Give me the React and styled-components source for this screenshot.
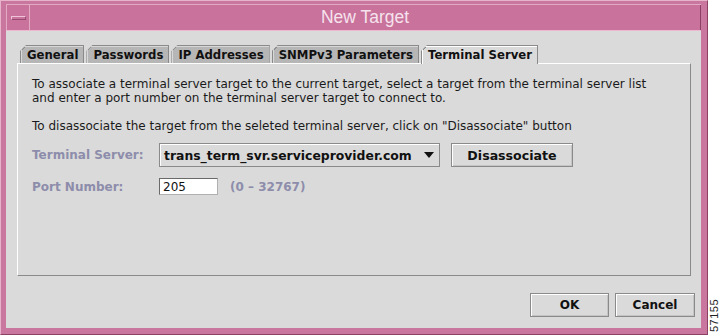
import React from "react";
import styled, { createGlobalStyle } from "styled-components";

const GlobalStyle = createGlobalStyle`
  html, body {
    margin: 0;
    padding: 0;
    background: #ffffff;
  }
  body {
    font-family: "DejaVu Sans", "Liberation Sans", sans-serif;
  }
`;

const Page = styled.div`
  display: flex;
  width: 720px;
  height: 335px;
  overflow: hidden;
`;

const Window = styled.div`
  box-sizing: border-box;
  width: 708px;
  height: 335px;
  display: flex;
  flex-direction: column;
  background: #c9779e;
  border: 1px solid;
  border-color: #e6b3cb #8c4065 #8c4065 #e6b3cb;
  padding: 3px 6px 6px 5px;
`;

const TitleBar = styled.div`
  box-sizing: border-box;
  display: flex;
  height: 27px;
  background: #c8729c;
  border-top: 1px solid #e3aac4;
  border-bottom: 1px solid #eab8cf;
`;

const MenuButton = styled.div`
  box-sizing: border-box;
  width: 24px;
  display: flex;
  align-items: center;
  justify-content: center;
  border-left: 1px solid #e3aac4;
  border-right: 1px solid #e3aac4;
`;

const MenuBar = styled.div`
  box-sizing: border-box;
  width: 15px;
  height: 4px;
  border: 1px solid;
  border-color: #f0c4d8 #9a4a70 #9a4a70 #f0c4d8;
`;

const Title = styled.div`
  flex: 1;
  display: flex;
  align-items: center;
  justify-content: center;
  font-family: "Liberation Sans", Arial, sans-serif;
  font-size: 17.5px;
  color: #f6e2ec;
  border-right: 1px solid #8c4065;
`;

const Body = styled.div`
  flex: 1;
  display: flex;
  flex-direction: column;
  background: #dadada;
  padding: 14px 6px 10px 11px;
`;

const TabRow = styled.div`
  display: flex;
  align-items: flex-end;
  gap: 2px;
  height: 18px;
  padding-left: 3px;
  position: relative;
  z-index: 1;
`;

const Tab = styled.div`
  box-sizing: border-box;
  height: ${(p) => (p.$active ? "19px" : "18px")};
  margin-bottom: ${(p) => (p.$active ? "-1px" : "0")};
  display: flex;
  align-items: center;
  padding: 0 5px 0 6px;
  font-size: 11.7px;
  font-weight: bold;
  color: #111;
  border: 1px solid #8a8a8a;
  border-bottom: none;
  box-shadow: inset 1px 1px 0 ${(p) => (p.$active ? "#ffffff" : "#d8d8d8")};
  background: linear-gradient(
    135deg,
    transparent 4px,
    #8a8a8a 4px,
    #8a8a8a 5px,
    ${(p) => (p.$active ? "#dadada" : "#b6b6b6")} 5px
  );
  background-origin: border-box;
  clip-path: polygon(6px 0, 100% 0, 100% 100%, 0 100%, 0 6px);
`;

const Panel = styled.div`
  box-sizing: border-box;
  height: 213px;
  margin-right: 4px;
  border: 1px solid;
  border-color: #ffffff #8a8a8a #8a8a8a #ffffff;
  padding: 13px 14px;
  font-size: 12px;
  color: #1a1a1a;
`;

const Para = styled.p`
  margin: 0 0 ${(p) => p.$mb}px 0;
  line-height: 14px;
`;

const Form = styled.div`
  display: grid;
  grid-template-columns: 127px auto;
  row-gap: 11px;
  align-items: center;
`;

const Label = styled.div`
  font-size: 12px;
  font-weight: bold;
  color: #8d8dab;
`;

const Line = styled.div`
  display: flex;
  align-items: center;
  gap: ${(p) => p.$gap || 11}px;
`;

const Combo = styled.div`
  box-sizing: border-box;
  width: 281px;
  height: 24px;
  display: flex;
  align-items: center;
  justify-content: space-between;
  padding: 0 5px 0 4px;
  border: 1px solid #8a8a8a;
  box-shadow: inset 1px 1px 0 #ffffff;
  font-size: 12.4px;
  font-weight: bold;
  color: #111;
`;

const Button = styled.div`
  box-sizing: border-box;
  width: ${(p) => p.$w}px;
  height: 24px;
  display: flex;
  align-items: center;
  justify-content: center;
  border: 1px solid #8a8a8a;
  box-shadow: inset 1px 1px 0 #ffffff, inset -1px -1px 0 #c4c4c4;
  font-size: ${(p) => p.$size || 12}px;
  font-weight: bold;
  color: #111;
`;

const Input = styled.div`
  box-sizing: border-box;
  width: 59px;
  height: 17px;
  display: flex;
  align-items: center;
  padding-left: 3px;
  background: #ffffff;
  border: 1px solid;
  border-color: #6a6a6a #b0b0b0 #b0b0b0 #6a6a6a;
  font-size: 12px;
  color: #111;
`;

const Range = styled.span`
  font-size: 12px;
  font-weight: bold;
  color: #8d8dab;
`;

const Footer = styled.div`
  display: flex;
  justify-content: flex-end;
  gap: 6px;
  margin-top: 17px;
`;

const Side = styled.div`
  flex: 1;
  display: flex;
  align-items: flex-end;
  justify-content: center;
  padding-bottom: 3px;
`;

const FigNumber = styled.div`
  writing-mode: vertical-rl;
  transform: rotate(180deg);
  font-family: "Liberation Sans", Arial, sans-serif;
  font-size: 11px;
  letter-spacing: 0.5px;
  color: #222;
`;

const tabs = ["General", "Passwords", "IP Addresses", "SNMPv3 Parameters", "Terminal Server"];

const App = () => {
  return (
    <>
      <GlobalStyle />
      <Page>
        <Window>
          <TitleBar>
            <MenuButton>
              <MenuBar />
            </MenuButton>
            <Title>New Target</Title>
          </TitleBar>
          <Body>
            <TabRow>
              {tabs.map((t) => (
                <Tab key={t} $active={t === "Terminal Server"}>
                  {t}
                </Tab>
              ))}
            </TabRow>
            <Panel>
              <Para $mb={14}>
                To associate a terminal server target to the current target, select a target from the terminal server list
                <br />
                and enter a port number on the terminal server target to connect to.
              </Para>
              <Para $mb={10}>
                To disassociate the target from the seleted terminal server, click on "Disassociate" button
              </Para>
              <Form>
                <Label>Terminal Server:</Label>
                <Line>
                  <Combo>
                    <span>trans_term_svr.serviceprovider.com</span>
                    <svg width="10" height="6" viewBox="0 0 10 6">
                      <path d="M0 0 L10 0 L5 6 Z" fill="#111" />
                    </svg>
                  </Combo>
                  <Button $w={122} $size={12.6}>Disassociate</Button>
                </Line>
                <Label>Port Number:</Label>
                <Line $gap={12}>
                  <Input>205</Input>
                  <Range>(0 – 32767)</Range>
                </Line>
              </Form>
            </Panel>
            <Footer>
              <Button $w={79}>OK</Button>
              <Button $w={80}>Cancel</Button>
            </Footer>
          </Body>
        </Window>
        <Side>
          <FigNumber>57155</FigNumber>
        </Side>
      </Page>
    </>
  );
};

export default App;
